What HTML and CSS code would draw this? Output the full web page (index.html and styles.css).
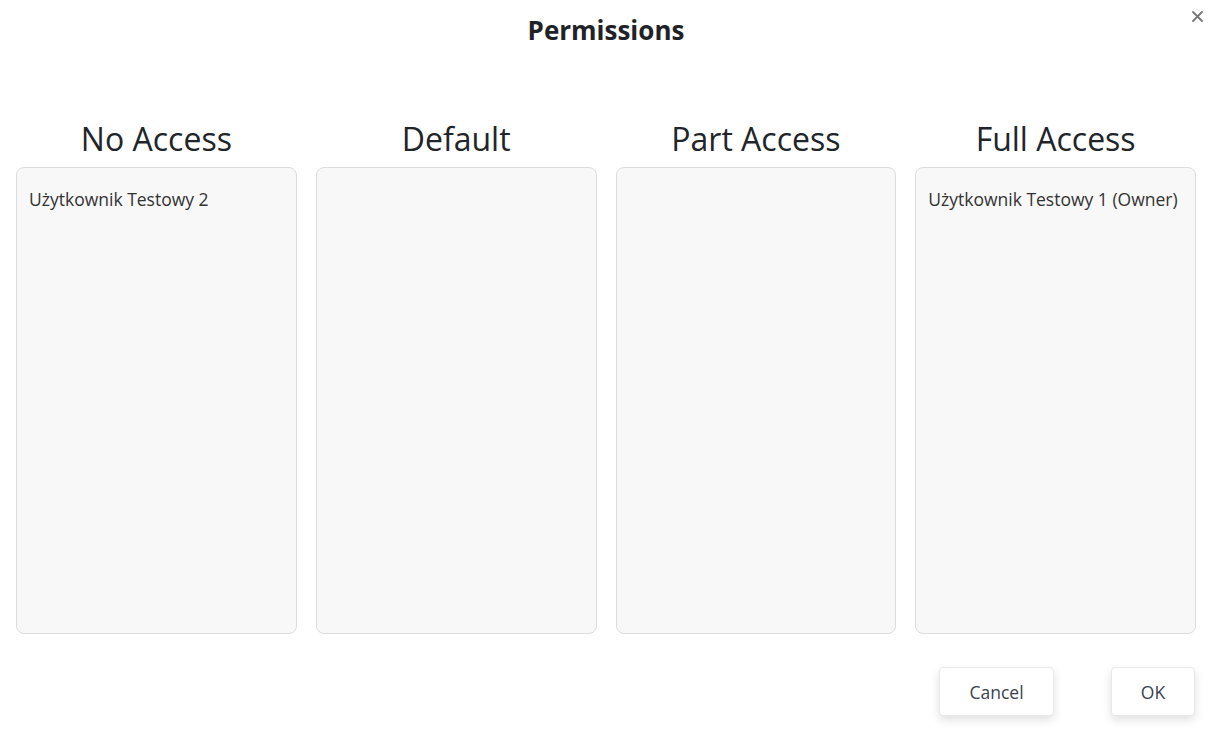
FILE: index.html
```html
<!DOCTYPE html>
<html lang="pl">
<head>
<meta charset="utf-8">
<title>Permissions</title>
<link rel="stylesheet" href="styles.css">
</head>
<body>
<div class="modal">
  <header class="modal-header">
    <h1 class="modal-title">Permissions</h1>
    <button class="close" aria-label="Close">
      <svg width="11" height="11" viewBox="0 0 11 11"><path d="M1 1L10 10M10 1L1 10" stroke="#777" stroke-width="1.8" stroke-linecap="round"/></svg>
    </button>
  </header>
  <main class="columns">
    <section class="col">
      <h2 class="col-title">No Access</h2>
      <div class="list"><div class="item">Użytkownik Testowy 2</div></div>
    </section>
    <section class="col">
      <h2 class="col-title">Default</h2>
      <div class="list"></div>
    </section>
    <section class="col">
      <h2 class="col-title">Part Access</h2>
      <div class="list"></div>
    </section>
    <section class="col">
      <h2 class="col-title">Full Access</h2>
      <div class="list"><div class="item">Użytkownik Testowy 1 (Owner)</div></div>
    </section>
  </main>
  <footer class="footer">
    <button class="btn btn-cancel">Cancel</button>
    <button class="btn btn-ok">OK</button>
  </footer>
</div>
</body>
</html>
```
FILE: styles.css
```css
html, body {
  margin: 0;
  padding: 0;
  background: #ffffff;
}
body {
  font-family: "Open Sans", "Noto Sans", "Liberation Sans", sans-serif;
  color: #212529;
}
.modal {
  width: 1208px;
  height: 733px;
  box-sizing: border-box;
  padding: 0 12px 0 16px;
  display: flex;
  flex-direction: column;
}
.modal-header {
  position: relative;
  height: 60px;
  display: flex;
  justify-content: center;
  align-items: flex-start;
}
.modal-title {
  margin: 13px 0 0;
  font-size: 26px;
  font-weight: 700;
  line-height: 34px;
  color: #1f2328;
}
.close {
  position: absolute;
  right: -11px;
  top: 6px;
  border: 0;
  background: none;
  padding: 4px;
  cursor: pointer;
}
.columns {
  margin-top: 55px;
  display: grid;
  grid-template-columns: repeat(4, 1fr);
  gap: 19px;
}
.col {
  display: flex;
  flex-direction: column;
  align-items: stretch;
}
.col-title {
  margin: 0;
  text-align: center;
  font-size: 32px;
  font-weight: 400;
  line-height: 48px;
  color: #212529;
}
.list {
  margin-top: 4px;
  height: 467px;
  background: #f8f8f8;
  border: 1px solid #dcdcdc;
  border-radius: 8px;
  padding: 19px 12px;
  box-sizing: border-box;
}
.item {
  font-size: 17.5px;
  line-height: 24px;
  color: #333;
  white-space: nowrap;
}
.footer {
  margin-top: 33px;
  display: flex;
  justify-content: flex-end;
  gap: 57px;
}
.btn {
  height: 49px;
  background: #fff;
  border: 1px solid #e8e8e8;
  border-radius: 4px;
  box-shadow: 0 4px 10px rgba(0, 0, 0, 0.12);
  font-family: inherit;
  font-size: 17.5px;
  color: #3b4150;
  cursor: pointer;
}
.btn-cancel {
  width: 115px;
}
.btn-ok {
  width: 84px;
  margin-right: 1px;
}
```
